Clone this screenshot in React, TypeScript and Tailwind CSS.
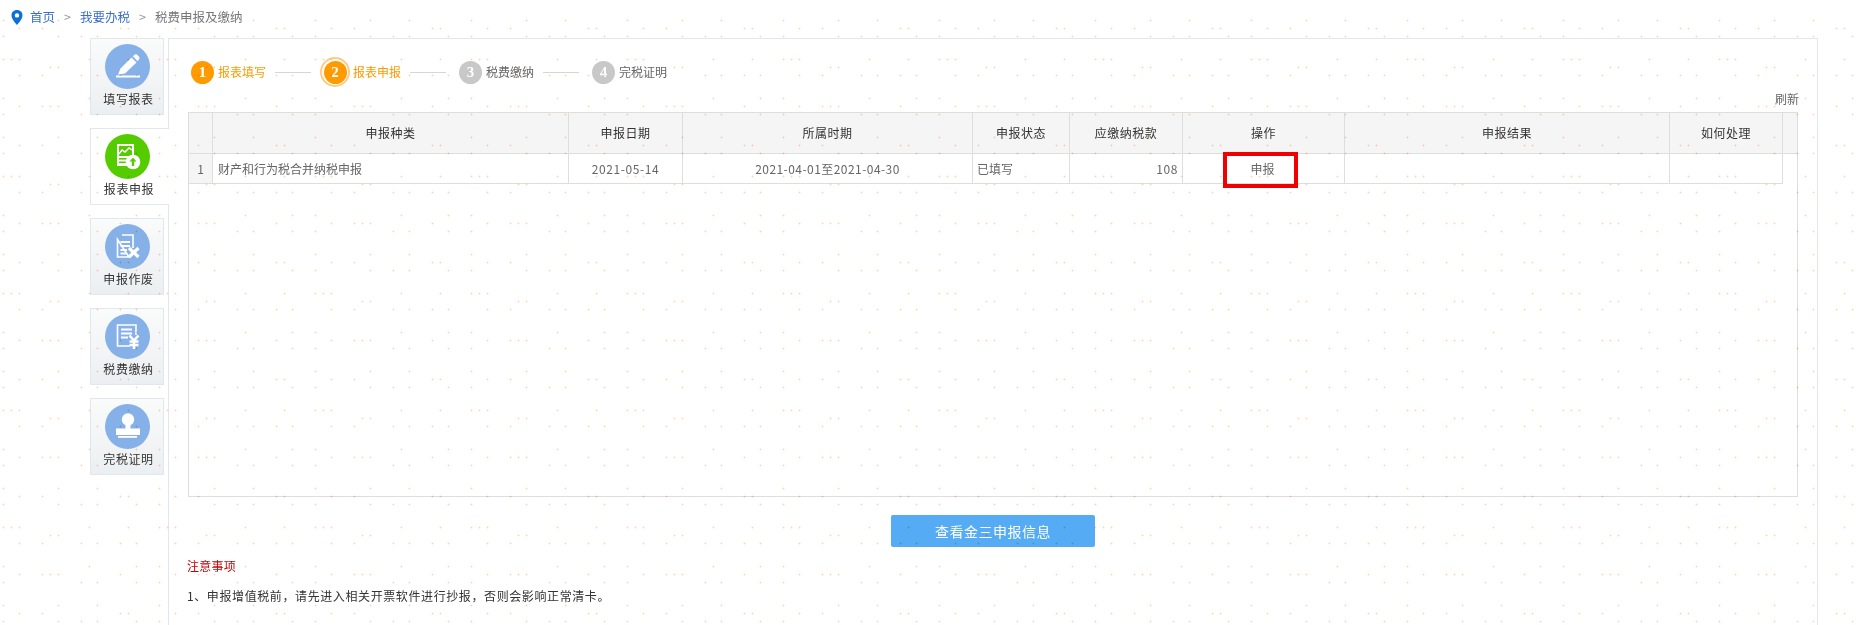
import React from "react";

const tile: [number, number[]][] = [
  [15, [15, 101, 148]],
  [23, [31, 54, 62, 70, 132]],
  [31, [15, 93, 109, 148]],
  [54, [15, 70, 109]],
  [62, [31, 54, 132, 140]],
  [70, [15, 70, 93, 109, 148]],
  [93, [15, 23, 31, 101, 140]],
  [101, [62, 70]],
  [109, [31, 54, 93, 109, 132, 148]],
];

function DotOverlay() {
  return (
    <svg className="pointer-events-none absolute inset-0 z-20 h-full w-full mix-blend-multiply" aria-hidden="true">
      <defs>
        <pattern id="dots" width="156" height="117" patternUnits="userSpaceOnUse" patternTransform="translate(144 83)">
          <rect width="156" height="117" fill="#ffffff" />
          {tile.map(([y, xs]) =>
            xs.map((x) => (
              <g key={`${x}-${y}`}>
                <rect x={x - 1} y={y} width="3" height="1" fill="#ffeee2" />
                <rect x={x} y={y - 1} width="1" height="3" fill="#ffeee2" />
                <rect x={x} y={y} width="1" height="1" fill="#fdd2b4" />
              </g>
            ))
          )}
        </pattern>
      </defs>
      <rect width="100%" height="100%" fill="url(#dots)" />
    </svg>
  );
}

function PencilIcon() {
  return (
    <svg viewBox="0 0 45 45" className="h-[45px] w-[45px]">
      <circle cx="22.5" cy="22.5" r="22.5" fill="#85b0e8" />
      <path d="M13 30.5 L15.5 24.5 L26.5 13.5 L31.5 18.5 L20 29.5 Z" fill="#fff" />
      <path d="M27.8 12.2 L30 10.4 Q31 9.8 32 10.6 L34.3 13 Q35 14 34.2 15 L32.6 17.2 Z" fill="#fff" />
      <rect x="11" y="31.5" width="24" height="2" fill="#fff" />
    </svg>
  );
}

function ReportIcon() {
  return (
    <svg viewBox="0 0 45 45" className="h-[45px] w-[45px]">
      <circle cx="22.5" cy="22.5" r="22.5" fill="#55cc00" />
      <rect x="12" y="10" width="17" height="22" fill="#fff" />
      <rect x="14" y="12" width="13" height="10" fill="#55cc00" />
      <path d="M14 20 L17 16 L20 18 L24 14 L27 16" fill="none" stroke="#fff" strokeWidth="1.4" />
      <rect x="14" y="24" width="9" height="1.6" fill="#55cc00" />
      <rect x="14" y="27.5" width="9" height="1.6" fill="#55cc00" />
      <circle cx="28" cy="28" r="7.3" fill="#fff" />
      <path d="M28 23.5 L31.5 27.5 L29.2 27.5 L29.2 32 L26.8 32 L26.8 27.5 L24.5 27.5 Z" fill="#55cc00" />
    </svg>
  );
}

function VoidIcon() {
  return (
    <svg viewBox="0 0 45 45" className="h-[45px] w-[45px]">
      <circle cx="22.5" cy="22.5" r="22.5" fill="#85b0e8" />
      <path d="M17 11 H28 V24 M24 33 H12.5 V15.5 Z" fill="none" stroke="#fff" strokeWidth="1.6" />
      <path d="M15.5 18 H25 M15.5 22 H25 M15.5 26 H22 M15.5 29.5 H21" stroke="#fff" strokeWidth="1.8" />
      <path d="M24 24 L33.5 33 M33.5 24 L24 33" stroke="#fff" strokeWidth="3.2" />
    </svg>
  );
}

function PayIcon() {
  return (
    <svg viewBox="0 0 45 45" className="h-[45px] w-[45px]">
      <circle cx="22.5" cy="22.5" r="22.5" fill="#85b0e8" />
      <path d="M25 32 H12.5 V11 H31 V21" fill="none" stroke="#fff" strokeWidth="1.6" />
      <path d="M16 15.5 H27 M16 19.5 H27 M16 23.5 H23" stroke="#fff" strokeWidth="1.8" />
      <path d="M24.5 21.5 L29 26.5 L33.5 21.5 M24.5 27.5 H33.5 M24.5 31 H33.5 M29 26.5 V35" fill="none" stroke="#fff" strokeWidth="2.6" />
    </svg>
  );
}

function StampIcon() {
  return (
    <svg viewBox="0 0 45 45" className="h-[45px] w-[45px]">
      <circle cx="22.5" cy="22.5" r="22.5" fill="#85b0e8" />
      <circle cx="23" cy="15.5" r="6.2" fill="#fff" />
      <rect x="20.5" y="19" width="5" height="6.5" fill="#fff" />
      <rect x="11" y="24.5" width="24" height="6.5" fill="#fff" />
      <rect x="13" y="32" width="19" height="1.8" fill="#fff" />
    </svg>
  );
}

function SideTab({ label, icon, active }: { label: string; icon: React.ReactNode; active?: boolean }) {
  return (
    <div
      className={
        active
          ? "relative z-10 -mr-px flex h-[77px] w-[79px] flex-col items-center border border-r-0 border-[#e2e7ee] bg-white pt-[5px]"
          : "flex h-[77px] w-[74px] flex-col items-center border border-[#e2e7ee] bg-gradient-to-b from-[#fafbfb] to-[#ecEff1] pt-[5px]"
      }
    >
      <div className={active ? "mr-[5px] h-[45px]" : "h-[45px]"}>{icon}</div>
      <div className={active ? "ml-[-2px] text-[12px] leading-[20px] tracking-[0.6px] text-[#333]" : "ml-[3px] text-[12px] leading-[20px] tracking-[0.6px] text-[#333]"}>
        {label}
      </div>
    </div>
  );
}

function Num({ n, on }: { n: number; on: boolean }) {
  return (
    <span
      className={
        on
          ? "flex h-[23px] w-[23px] items-center justify-center rounded-full bg-[#ff9a00] font-['Liberation_Serif',serif] text-[15px] font-bold text-white"
          : "flex h-[23px] w-[23px] items-center justify-center rounded-full bg-[#c8c8c8] font-['Liberation_Serif',serif] text-[15px] font-bold text-white"
      }
    >
      {n}
    </span>
  );
}

function Line() {
  return <span className="ml-[9px] h-px w-[36px] bg-[#d6d6d6]" />;
}

function Steps() {
  return (
    <div className="flex h-[26px] items-center pl-[3px] text-[12px]">
      <Num n={1} on />
      <span className="ml-[4px] text-[#ff9a00]">报表填写</span>
      <Line />
      <span className="ml-[9px] flex h-[30px] w-[30px] items-center justify-center rounded-full border-2 border-[#ffcb85] bg-white">
        <Num n={2} on />
      </span>
      <span className="ml-[3px] text-[#ff9a00]">报表申报</span>
      <Line />
      <span className="ml-[13px]">
        <Num n={3} on={false} />
      </span>
      <span className="ml-[4px] text-[#666]">税费缴纳</span>
      <Line />
      <span className="ml-[13px]">
        <Num n={4} on={false} />
      </span>
      <span className="ml-[4px] text-[#666]">完税证明</span>
    </div>
  );
}

function Head({ children }: { children?: React.ReactNode }) {
  return <div className="flex items-center justify-center border-r border-[#dedede] text-[12px] tracking-[0.5px] text-[#333]">{children}</div>;
}

function Cell({ children, className }: { children?: React.ReactNode; className?: string }) {
  return <div className={`flex items-center border-r border-[#dedede] text-[12px] text-[#666] ${className ?? ""}`}>{children}</div>;
}

function DataTable() {
  return (
    <div className="h-[385px] border border-[#dedede] bg-white">
      <div className="grid h-[41px] grid-cols-[24px_356px_114px_290px_97px_113px_162px_325px_113px_1fr] border-b border-[#dedede] bg-[#f5f5f5]">
        <Head />
        <Head>申报种类</Head>
        <Head>申报日期</Head>
        <Head>所属时期</Head>
        <Head>申报状态</Head>
        <Head>应缴纳税款</Head>
        <Head>操作</Head>
        <Head>申报结果</Head>
        <Head>如何处理</Head>
        <div />
      </div>
      <div className="grid h-[30px] w-[1594px] grid-cols-[24px_356px_114px_290px_97px_113px_162px_325px_113px] border-b border-[#dedede]">
        <Cell className="justify-center bg-[#f5f5f5]">1</Cell>
        <Cell className="pl-[5px]">财产和行为税合并纳税申报</Cell>
        <Cell className="justify-center tracking-[0.6px]">2021-05-14</Cell>
        <Cell className="justify-center tracking-[0.45px]">2021-04-01至2021-04-30</Cell>
        <Cell className="pl-[4px]">已填写</Cell>
        <Cell className="justify-end pr-[4px] tracking-[0.6px] text-[#8a6d50]">108</Cell>
        <Cell className="relative justify-center pr-[2px] text-[#444]">
          申报
          <span className="absolute left-[40px] top-[-2px] h-[36px] w-[75px] border-4 border-[#f00000]" />
        </Cell>
        <Cell />
        <Cell />
      </div>
    </div>
  );
}

export default function App() {
  return (
    <div className="relative h-[625px] overflow-hidden bg-white font-['Noto_Sans_CJK_SC','Liberation_Sans',sans-serif]">
      <div className="flex h-[38px] items-center pb-[3px] pl-[11px] text-[12.5px]">
        <svg viewBox="0 0 12 15" className="h-[15px] w-[12px]">
          <path fillRule="evenodd" d="M6 0 C2.7 0 .5 2.4 .5 5.4 C.5 9 4.6 13 6 15 C7.4 13 11.5 9 11.5 5.4 C11.5 2.4 9.3 0 6 0 Z M6 3.2 A2.2 2.2 0 1 1 6 7.6 A2.2 2.2 0 1 1 6 3.2 Z" fill="#0f6fd6" />
        </svg>
        <span className="ml-[7px] text-[#3a6fd0]">首页</span>
        <span className="ml-[9px] text-[#999]">&gt;</span>
        <span className="ml-[9px] text-[#3a6fd0]">我要办税</span>
        <span className="ml-[9px] text-[#999]">&gt;</span>
        <span className="ml-[9px] text-[#777]">税费申报及缴纳</span>
      </div>

      <div className="ml-[90px] mr-[40px] flex">
        <div className="flex w-[78px] flex-col gap-[13px]">
          <SideTab label="填写报表" icon={<PencilIcon />} />
          <SideTab label="报表申报" icon={<ReportIcon />} active />
          <SideTab label="申报作废" icon={<VoidIcon />} />
          <SideTab label="税费缴纳" icon={<PayIcon />} />
          <SideTab label="完税证明" icon={<StampIcon />} />
        </div>

        <div className="h-[600px] flex-1 border border-b-0 border-[#e2e7ee] pl-[19px] pr-[19px] pt-[20px]">
          <Steps />
          <div className="-mr-[1px] flex h-[27px] items-center justify-end text-[12px] text-[#666]">刷新</div>
          <DataTable />
          <div className="mt-[18px] flex justify-center">
            <button className="h-[32px] w-[204px] rounded-[2px] bg-[#55acf5] text-[14px] tracking-[0.5px] text-white">查看金三申报信息</button>
          </div>
          <div className="-ml-px mt-[9px] text-[12px] leading-[20px] tracking-[0.25px] text-[#c80000]">注意事项</div>
          <div className="-ml-px mt-[10px] text-[12px] leading-[20px] tracking-[0.6px] text-[#333]">
            1、申报增值税前，请先进入相关开票软件进行抄报，否则会影响正常清卡。
          </div>
        </div>
      </div>
      <DotOverlay />
    </div>
  );
}
